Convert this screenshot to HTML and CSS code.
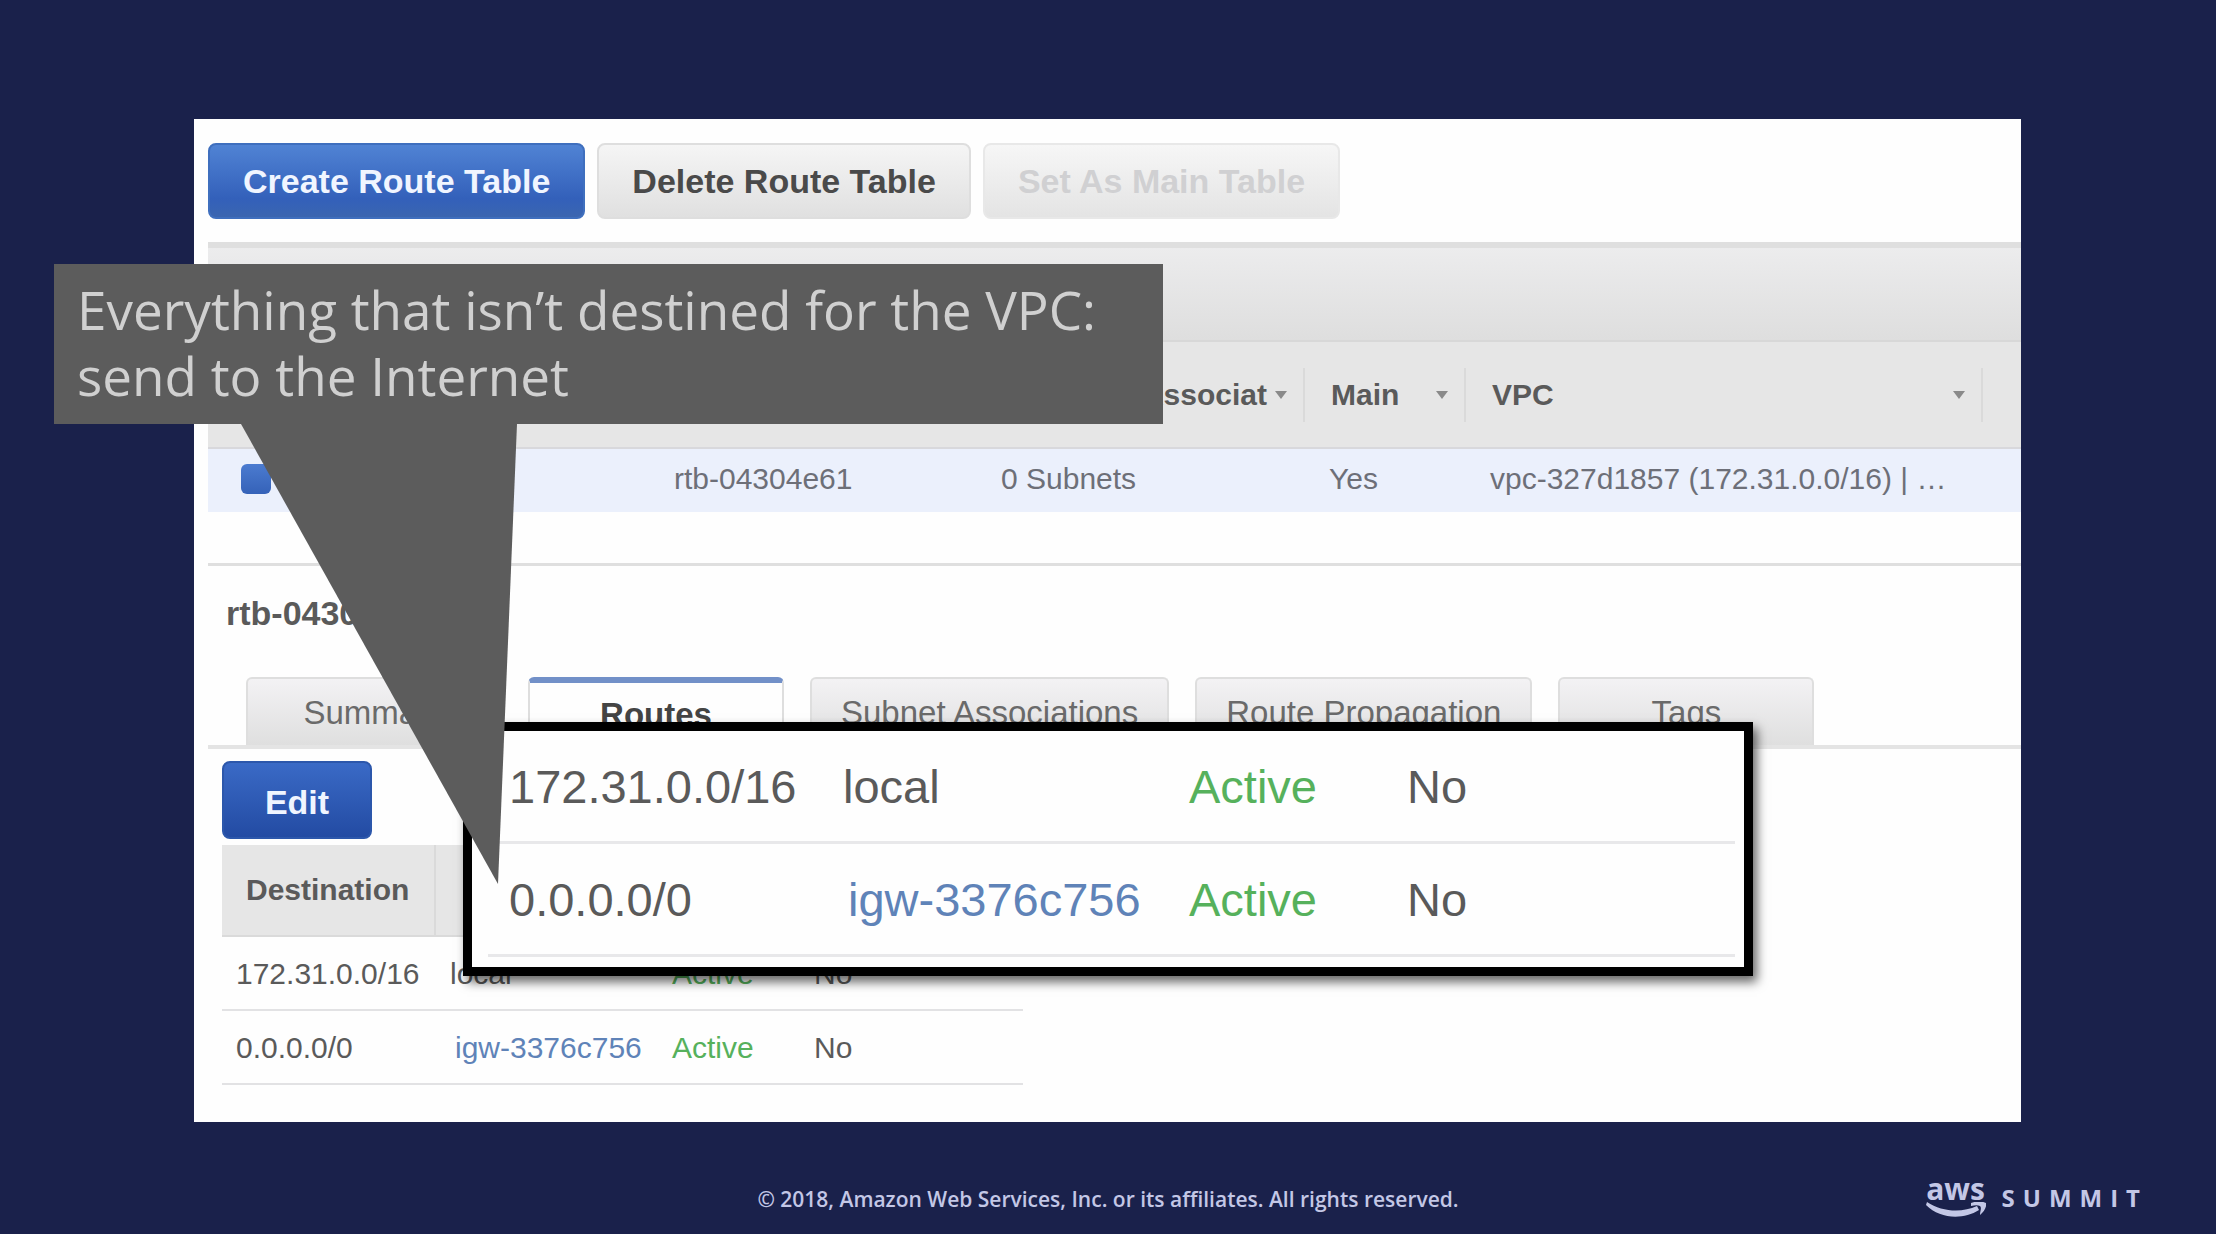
FILE: index.html
```html
<!DOCTYPE html>
<html lang="en">
<head>
<meta charset="utf-8">
<title>VPC Route Tables</title>
<link rel="stylesheet" href="styles.css">
</head>
<body>
<main class="slide">
  <section class="console">
    <div class="actions">
      <button class="btn btn-primary" type="button">Create Route Table</button>
      <button class="btn" type="button">Delete Route Table</button>
      <button class="btn" type="button" disabled>Set As Main Table</button>
    </div>

    <div class="filter-bar"></div>

    <table class="list">
      <colgroup>
        <col class="col-check"><col class="col-name"><col class="col-id"><col class="col-assoc"><col class="col-main"><col class="col-vpc"><col>
      </colgroup>
      <thead>
        <tr>
          <th></th>
          <th></th>
          <th></th>
          <th><div class="head head-end"><span>Associat</span><i class="caret"></i></div></th>
          <th><div class="head"><span>Main</span><i class="caret"></i></div></th>
          <th><div class="head"><span>VPC</span><i class="caret"></i></div></th>
          <th></th>
        </tr>
      </thead>
      <tbody>
        <tr>
          <td class="pick"><input class="check" type="checkbox" checked aria-label="Select route table"></td>
          <td></td>
          <td>rtb-04304e61</td>
          <td>0 Subnets</td>
          <td>Yes</td>
          <td>vpc-327d1857 (172.31.0.0/16) | …</td>
          <td></td>
        </tr>
      </tbody>
    </table>

    <div class="detail">
      <h2 class="detail-title">rtb-04304e61</h2>
      <div class="tabs" role="tablist">
        <button class="tab" type="button" role="tab">Summary</button>
        <button class="tab tab-active" type="button" role="tab" aria-selected="true">Routes</button>
        <button class="tab" type="button" role="tab">Subnet Associations</button>
        <button class="tab" type="button" role="tab">Route Propagation</button>
        <button class="tab" type="button" role="tab">Tags</button>
      </div>
      <div class="pane">
        <button class="btn btn-edit" type="button">Edit</button>
        <table class="routes">
          <colgroup><col class="r-dest"><col class="r-target"><col class="r-status"><col></colgroup>
          <thead>
            <tr><th>Destination</th><th></th><th></th><th></th></tr>
          </thead>
          <tbody>
            <tr><td>172.31.0.0/16</td><td>local</td><td class="ok">Active</td><td>No</td></tr>
            <tr><td>0.0.0.0/0</td><td><a class="link" href="#igw">igw-3376c756</a></td><td class="ok">Active</td><td>No</td></tr>
          </tbody>
        </table>
      </div>
    </div>

    <div class="lens">
      <table class="lens-table">
        <colgroup><col class="l-dest"><col class="l-target"><col class="l-status"><col></colgroup>
        <tbody>
          <tr><td>172.31.0.0/16</td><td>local</td><td class="ok">Active</td><td>No</td></tr>
          <tr><td>0.0.0.0/0</td><td><a class="link" href="#igw">igw-3376c756</a></td><td class="ok">Active</td><td>No</td></tr>
        </tbody>
      </table>
    </div>
  </section>

  <aside class="callout">
    <p>Everything that isn’t destined for the VPC:<br>send to the Internet</p>
    <svg class="tail" viewBox="0 0 276 460" aria-hidden="true"><path d="M0 0H276L257 460Z"/></svg>
  </aside>

  <footer class="footer">
    <p class="copyright">© 2018, Amazon Web Services, Inc. or its affiliates. All rights reserved.</p>
    <div class="brand">
      <div class="aws">
        <span>aws</span>
        <svg class="smile" viewBox="0 0 60 16" aria-hidden="true"><path d="M1 0C16 10 36 11 51 4L53 8C37 18 14 17 0 3ZM45 1C50 -1 56 -1 60 1C61 5 58 10 54 13C54 9 56 6 54 4C52 3 49 3 45 4Z"/></svg>
      </div>
      <span class="summit">SUMMIT</span>
    </div>
  </footer>
</main>
</body>
</html>
```

FILE: styles.css
```css
* { box-sizing: border-box; }

body {
  margin: 0;
  background: #1a214b;
  font-family: "Liberation Sans", Arial, sans-serif;
  font-size: 30px;
  color: #5a5a5a;
}

p, h2 { margin: 0; }

.slide {
  position: relative;
  display: flex;
  flex-direction: column;
  min-height: 100vh;
  padding-top: 119px;
}

.console {
  position: relative;
  margin: 0 195px 0 194px;
  padding: 24px 0 37px 14px;
  background: #fefefe;
}

.actions {
  display: flex;
  gap: 12px;
  margin-bottom: 23px;
}

.btn {
  height: 76px;
  padding: 0 33px;
  border: 2px solid #dedede;
  border-radius: 8px;
  background: linear-gradient(#f5f5f5, #e0e0e0);
  color: #4a4a4a;
  font: bold 34px "Liberation Sans", Arial, sans-serif;
}

.btn:disabled {
  border-color: #e8e8e8;
  background: linear-gradient(#f6f6f6, #e4e4e4);
  color: #d0d0d2;
}

.btn-primary {
  border-color: #3f6fbe;
  background: linear-gradient(#5083d4, #3360ba 75%, #3b66b0);
  color: #f0f5ff;
}

.btn-edit {
  display: block;
  width: 150px;
  height: 78px;
  margin-bottom: 6px;
  padding: 4px 0 0;
  border-color: #2c57ab;
  background: linear-gradient(#3a6ac6, #234ba3);
  color: #f0f5ff;
}

.filter-bar {
  height: 100px;
  border-top: 6px solid #dfdfdf;
  border-bottom: 2px solid #d8d8d8;
  background: linear-gradient(#ececed, #dedede);
}

table {
  border-collapse: separate;
  border-spacing: 0;
  table-layout: fixed;
}

th, td {
  padding: 0;
  text-align: left;
  white-space: nowrap;
}

.list { width: 100%; }
.col-check { width: 112px; }
.col-name { width: 330px; }
.col-id { width: 327px; }
.col-assoc { width: 328px; }
.col-main { width: 161px; }
.col-vpc { width: 517px; }

.list th {
  height: 107px;
  border-bottom: 2px solid #d8d8dc;
  background: #e6e6e6;
}

.head {
  display: flex;
  align-items: center;
  justify-content: space-between;
  gap: 8px;
  height: 54px;
  padding: 0 16px 0 26px;
  border-right: 2px solid #dadada;
}

.head-end { justify-content: flex-end; }

.caret {
  flex: none;
  border: 6px solid transparent;
  border-top: 8px solid #8a8a8a;
  border-bottom: 0;
}

.list td {
  height: 63px;
  padding: 0 0 4px 24px;
  background: #ebf0fc;
  color: #6d6f78;
}

.list .pick { padding-left: 33px; }

.check {
  display: block;
  appearance: none;
  width: 30px;
  height: 30px;
  margin: 0;
  border-radius: 6px;
  background: linear-gradient(#4b7bd0, #3562b8);
}

.detail {
  margin-top: 51px;
  padding-top: 27px;
  border-top: 3px solid #dfdfdf;
}

.detail-title {
  padding-left: 18px;
  font-size: 34px;
  line-height: 40px;
}

.tabs {
  display: flex;
  gap: 26px;
  margin-top: 44px;
  padding-left: 38px;
  border-bottom: 4px solid #e4e4e4;
}

.tab {
  height: 68px;
  min-width: 256px;
  padding: 2px 29px 0;
  border: 2px solid #dedede;
  border-bottom: 0;
  border-radius: 6px 6px 0 0;
  background: linear-gradient(#f3f2f4, #dfdfdf);
  color: #6a6a6a;
  font: 33px "Liberation Sans", Arial, sans-serif;
}

.tab-active {
  border-top: 6px solid #7290c8;
  background: #fefefe;
  color: #444;
  font-weight: bold;
}

.pane { padding: 12px 0 0 14px; }

.routes { width: 801px; }
.r-dest { width: 214px; }
.r-target { width: 222px; }
.r-status { width: 142px; }

.routes th {
  height: 92px;
  padding-left: 24px;
  border-right: 2px solid #dadada;
  border-bottom: 2px solid #dadada;
  background: #e6e6e6;
}

.routes td {
  height: 74px;
  padding: 2px 0 0 14px;
  border-bottom: 2px solid #e2e2e4;
}

.link {
  padding-left: 5px;
  color: #5f83b8;
  text-decoration: none;
}

.routes .ok, .lens .ok { color: #56b15c; }

.lens {
  position: absolute;
  left: 269px;
  top: 603px;
  width: 1290px;
  padding: 0 9px 10px 16px;
  border: 9px solid #000;
  background: #fefefe;
  box-shadow: 4px 6px 10px rgba(0, 0, 0, 0.6);
}

.lens-table {
  width: 100%;
  font-size: 47px;
}

.l-dest { width: 334px; }
.l-target { width: 346px; }
.l-status { width: 218px; }

.lens td {
  height: 113px;
  padding-left: 21px;
  border-bottom: 3px solid #e8e8ea;
}

.callout {
  position: absolute;
  left: 54px;
  top: 264px;
  width: 1109px;
  height: 160px;
  padding: 13px 23px;
  background: #5c5c5c;
  color: #d0d0d0;
  font: 400 53px/66px "Open Sans", "Noto Sans", sans-serif;
  white-space: nowrap;
}

.tail {
  position: absolute;
  left: 187px;
  top: 160px;
  width: 276px;
  height: 460px;
  fill: #5c5c5c;
}

.footer {
  display: grid;
  grid-template-columns: 1fr auto 1fr;
  align-items: center;
  margin-top: 54px;
  padding: 0 68px;
  color: #c3c7e6;
  font-family: "Open Sans", "Noto Sans", sans-serif;
}

.copyright {
  grid-column: 2;
  padding-top: 4px;
  font-size: 21px;
  font-weight: 600;
}

.brand {
  display: flex;
  justify-self: end;
  align-items: center;
  gap: 16px;
}

.aws {
  display: grid;
  justify-items: center;
  font-size: 30px;
  font-weight: 700;
  line-height: 26px;
}

.smile {
  width: 60px;
  height: 16px;
  fill: currentColor;
}

.summit {
  font-size: 24px;
  font-weight: 700;
  letter-spacing: 8px;
}
```
